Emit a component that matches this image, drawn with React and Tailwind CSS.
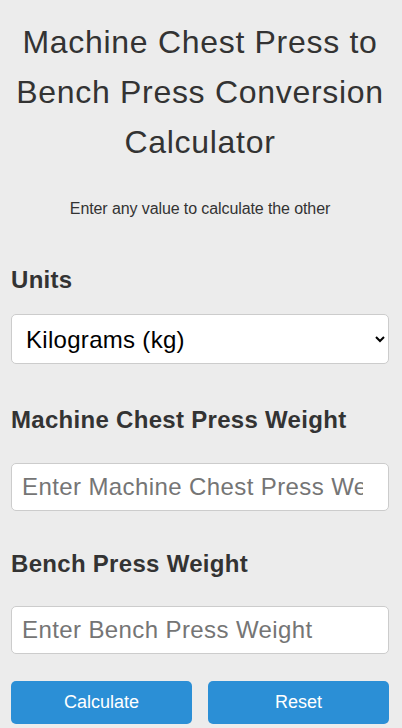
import React, { useState } from "react";

export default function App() {
  const [unit, setUnit] = useState("kg");
  const [machine, setMachine] = useState("");
  const [bench, setBench] = useState("");

  return (
    <div className="min-h-screen bg-[#ececec] pl-[11px] pr-[13px] pt-[17px] pb-4 font-['Liberation_Sans',Arial,sans-serif] text-[#333]">
      <h1 className="text-center text-[32px] leading-[50px] font-normal tracking-[0.7px]">
        Machine Chest Press to Bench Press Conversion Calculator
      </h1>
      <p className="mt-[32px] text-center text-[16px] leading-[20px] tracking-[-0.1px]">
        Enter any value to calculate the other
      </p>

      <label className="mt-[47px] block text-[24px] font-bold leading-[28px] tracking-[0.3px]">
        Units
      </label>
      <select
        value={unit}
        onChange={(e) => setUnit(e.target.value)}
        className="mt-[20px] block h-[50px] w-full rounded-[5px] border border-[#ccc] bg-white px-[10px] font-['Liberation_Sans',Arial,sans-serif] text-[24px] tracking-[0.3px] text-black"
      >
        <option value="kg">Kilograms (kg)</option>
        <option value="lb">Pounds (lb)</option>
      </select>

      <label className="mt-[42px] block text-[24px] font-bold leading-[28px] tracking-[0.3px]">
        Machine Chest Press Weight
      </label>
      <input
        type="number"
        value={machine}
        onChange={(e) => setMachine(e.target.value)}
        placeholder="Enter Machine Chest Press Weight"
        className="mt-[29px] block h-[48px] w-full rounded-[5px] border border-[#ccc] bg-white px-[10px] font-['Liberation_Sans',Arial,sans-serif] text-[24px] tracking-[0.4px] text-black placeholder:text-[#757575]"
      />

      <label className="mt-[39px] block text-[24px] font-bold leading-[28px] tracking-[0.3px]">
        Bench Press Weight
      </label>
      <input
        type="number"
        value={bench}
        onChange={(e) => setBench(e.target.value)}
        placeholder="Enter Bench Press Weight"
        className="mt-[28px] block h-[48px] w-full rounded-[5px] border border-[#ccc] bg-white px-[10px] font-['Liberation_Sans',Arial,sans-serif] text-[24px] tracking-[0.4px] text-black placeholder:text-[#757575]"
      />

      <div className="mt-[27px] flex gap-[16px]">
        <button className="h-[43px] flex-1 rounded-[5px] bg-[#2b8fd6] font-['Liberation_Sans',Arial,sans-serif] text-[18px] text-white">
          Calculate
        </button>
        <button
          onClick={() => {
            setMachine("");
            setBench("");
          }}
          className="h-[43px] flex-1 rounded-[5px] bg-[#2b8fd6] font-['Liberation_Sans',Arial,sans-serif] text-[18px] text-white"
        >
          Reset
        </button>
      </div>
    </div>
  );
}
